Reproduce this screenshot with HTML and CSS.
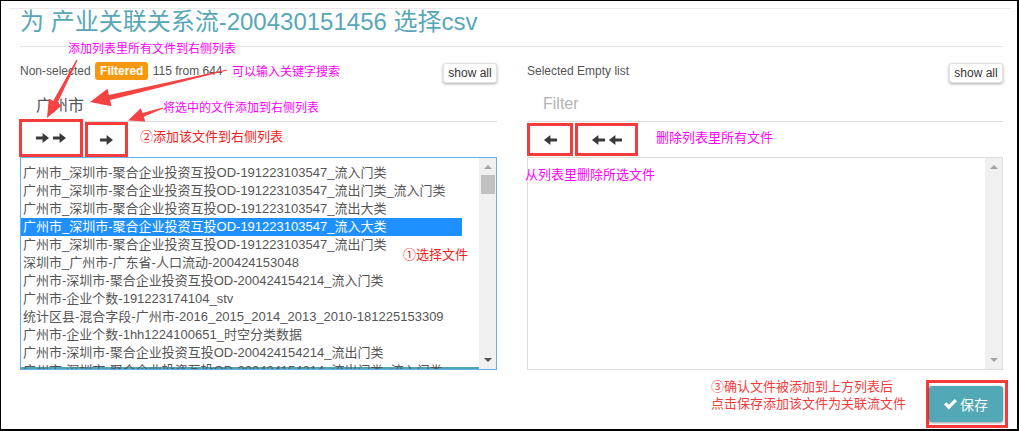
FILE: index.html
```html
<!DOCTYPE html>
<html lang="zh-CN">
<head>
<meta charset="utf-8">
<title>选择csv</title>
<link rel="stylesheet" href="styles.css">
</head>
<body>
<div class="page">
  <div class="topline"></div>
  <h1 class="title">为 产业关联关系流-200430151456 选择csv</h1>
  <div class="rule"></div>

  <div class="columns">
    <div class="col">
      <div class="col-head">
        <div class="info">Non-selected <span class="badge">Filtered</span> 115 from 644</div>
        <button class="show-all">show all</button>
      </div>
      <div class="filter"><span class="filter-value">广州市</span></div>
      <div class="btn-row">
        <button class="mv mv-all-right">
          <svg class="ar" viewBox="0 0 13 10"><path d="M0 3.4H6.6V0L13 5L6.6 10V6.6H0Z"/></svg>
          <svg class="ar" viewBox="0 0 13 10"><path d="M0 3.4H6.6V0L13 5L6.6 10V6.6H0Z"/></svg>
        </button>
        <button class="mv mv-one-right">
          <svg class="ar" viewBox="0 0 13 10"><path d="M0 3.4H6.6V0L13 5L6.6 10V6.6H0Z"/></svg>
        </button>
      </div>
      <div class="listbox focused">
        <ul class="items">
          <li>广州市_深圳市-聚合企业投资互投OD-191223103547_流入门类</li>
          <li>广州市_深圳市-聚合企业投资互投OD-191223103547_流出门类_流入门类</li>
          <li>广州市_深圳市-聚合企业投资互投OD-191223103547_流出大类</li>
          <li class="selected">广州市_深圳市-聚合企业投资互投OD-191223103547_流入大类</li>
          <li>广州市_深圳市-聚合企业投资互投OD-191223103547_流出门类</li>
          <li>深圳市_广州市-广东省-人口流动-200424153048</li>
          <li>广州市-深圳市-聚合企业投资互投OD-200424154214_流入门类</li>
          <li>广州市-企业个数-191223174104_stv</li>
          <li>统计区县-混合字段-广州市-2016_2015_2014_2013_2010-181225153309</li>
          <li>广州市-企业个数-1hh1224100651_时空分类数据</li>
          <li>广州市-深圳市-聚合企业投资互投OD-200424154214_流出门类</li>
          <li>广州市-深圳市-聚合企业投资互投OD-200424154214_流出门类_流入门类</li>
        </ul>
        <div class="sb">
          <span class="sb-up"></span>
          <span class="sb-thumb"></span>
          <span class="sb-space"></span>
          <span class="sb-down dark"></span>
        </div>
      </div>
    </div>

    <div class="col">
      <div class="col-head">
        <div class="info">Selected Empty list</div>
        <button class="show-all">show all</button>
      </div>
      <div class="filter"><span class="filter-placeholder">Filter</span></div>
      <div class="btn-row right">
        <button class="mv mv-one-left">
          <svg class="ar" viewBox="0 0 13 10"><path d="M13 3.4H6.4V0L0 5L6.4 10V6.6H13Z"/></svg>
        </button>
        <button class="mv mv-all-left">
          <svg class="ar" viewBox="0 0 13 10"><path d="M13 3.4H6.4V0L0 5L6.4 10V6.6H13Z"/></svg>
          <svg class="ar" viewBox="0 0 13 10"><path d="M13 3.4H6.4V0L0 5L6.4 10V6.6H13Z"/></svg>
        </button>
      </div>
      <div class="listbox">
        <ul class="items empty"></ul>
        <div class="sb">
          <span class="sb-up"></span>
          <span class="sb-space"></span>
          <span class="sb-down"></span>
        </div>
      </div>
    </div>
  </div>

  <div class="footer">
    <div class="note">③确认文件被添加到上方列表后<br>点击保存添加该文件为关联流文件</div>
    <div class="save-frame">
      <button class="save">
        <svg class="check" viewBox="0 0 13 12"><path d="M0 6.6L2.3 4.3L4.8 6.8L10.7 0.9L13 3.2L4.8 11.4Z"/></svg>
        <span>保存</span>
      </button>
    </div>
  </div>

  <div class="annot magenta a1">添加列表里所有文件到右侧列表</div>
  <div class="annot magenta a2">可以输入关键字搜索</div>
  <div class="annot magenta a3">将选中的文件添加到右侧列表</div>
  <div class="annot red big r1">②添加该文件到右侧列表</div>
  <div class="annot red big r2">①选择文件</div>
  <div class="annot magenta big a4">删除列表里所有文件</div>
  <div class="annot magenta big a5">从列表里删除所选文件</div>

  <svg class="arrows" viewBox="0 0 1019 431" width="1019" height="431">
    <polygon points="77.6,60.2 57.5,103.1 61.8,105.6 47,118 48.8,98.4 53.1,100.9 76.4,59.8"/>
    <polygon points="227.1,70.6 110.1,99.9 111.5,106.2 90,102 107.5,88.8 108.9,95.1 226.9,69.4"/>
    <polygon points="163.2,108.5 143.7,116.7 145.4,121.4 128,120.5 140.8,108.2 142.5,112.9 162.8,107.5"/>
  </svg>
</div>
</body>
</html>
```

FILE: styles.css
```css
* { box-sizing: border-box; }

html, body {
  margin: 0;
  padding: 0;
  background: #fff;
}

body {
  font-family: "Liberation Sans", "Noto Sans CJK SC", sans-serif;
  color: #555;
}

.page {
  position: relative;
  width: 1019px;
  height: 431px;
  border-style: solid;
  border-color: #000;
  border-width: 1px 2px 2px 1px;
  overflow: hidden;
}

.topline {
  margin: 7px 6px 0 8px;
  border-top: 1px solid #e8e8e8;
}

.title {
  margin: 0 0 0 19px;
  font-size: 24px;
  line-height: 26px;
  font-weight: normal;
  color: #57a7b8;
  white-space: nowrap;
}

.rule {
  margin: 11px 14px 0 19px;
  border-top: 1px solid #e5e5e5;
}

.columns {
  display: flex;
  gap: 30px;
  padding: 0 0 0 19px;
}

.col {
  width: 477px;
  display: flex;
  flex-direction: column;
}
.col + .col { width: 476px; }

.col-head {
  margin-top: 15px;
  height: 21px;
  display: flex;
  justify-content: space-between;
  align-items: flex-start;
}

.info {
  font-size: 12px;
  line-height: 18px;
  color: #555;
  white-space: nowrap;
}

.badge {
  display: inline-block;
  height: 18px;
  line-height: 18px;
  padding: 0 5px;
  margin: 0 1px;
  border-radius: 3px;
  background: #f7990c;
  color: #fff;
  font-weight: bold;
  font-size: 12px;
  vertical-align: top;
}

.show-all {
  width: 54px;
  height: 20px;
  margin-top: 1px;
  padding: 0;
  border: 1px solid #e2e2e2;
  border-radius: 3px;
  background: #fff;
  box-shadow: 0 1px 3px rgba(0, 0, 0, 0.35);
  font-family: "Liberation Sans", sans-serif;
  font-size: 12px;
  color: #333;
}

.filter {
  height: 39px;
  border-bottom: 1px solid #dddddd;
  padding: 0 0 0 16px;
  display: flex;
  align-items: center;
  font-size: 16px;
}
.filter-value { color: #555; margin-top: 3px; }
.filter-placeholder { color: #b3b3b3; margin-top: 3px; }

.btn-row {
  height: 35px;
  display: flex;
  gap: 2px;
  align-items: flex-end;
}
.btn-row.right { align-items: flex-start; }

.mv {
  display: flex;
  align-items: center;
  justify-content: center;
  gap: 4px;
  padding: 0;
  background: #fff;
  border: 3px solid #f53b3b;
}
.mv-all-right { width: 64px; height: 38px; margin-left: -1px; }
.mv-one-right { width: 43px; height: 35px; }
.mv-one-left { width: 46px; height: 33px; margin-top: 1px; }
.mv-all-left { width: 63px; height: 33px; margin-top: 1px; }

.ar {
  width: 13px;
  height: 10px;
  fill: #3a3a3a;
}

.listbox {
  height: 213px;
  display: flex;
  border: 1px solid #dcdcdc;
  background: #fff;
}
.listbox.focused { border-color: #66afe9; }

.items {
  flex: 1;
  margin: 0;
  padding: 6px 0 0 0;
  list-style: none;
  overflow: hidden;
  font-size: 13px;
  line-height: 18px;
  color: #555;
}
.focused .items { box-shadow: inset 0 -2px 0 #4fa5b5; }

.items li {
  width: 441px;
  padding-left: 2px;
  white-space: nowrap;
  overflow: hidden;
}
.items li.selected {
  background: #1e90ff;
  color: #fff;
}

.sb {
  width: 17px;
  flex: none;
  background: #f0f0f0;
  display: flex;
  flex-direction: column;
  align-items: center;
  padding: 7px 0 7px;
}
.sb-up {
  width: 0; height: 0;
  border-left: 4px solid transparent;
  border-right: 4px solid transparent;
  border-bottom: 4px solid #a3a3a3;
}
.sb-down {
  width: 0; height: 0;
  border-left: 4px solid transparent;
  border-right: 4px solid transparent;
  border-top: 4px solid #a3a3a3;
}
.sb-down.dark { border-top-color: #505050; }
.sb-thumb {
  width: 14px;
  height: 19px;
  margin-top: 6px;
  background: #c1c1c1;
}
.sb-space { flex: 1; }

.footer {
  margin-top: 10px;
  display: flex;
  justify-content: flex-end;
  align-items: flex-start;
  padding-right: 9px;
}

.note {
  margin: -3px 21px 0 0;
  width: 194px;
  font-family: "Noto Sans CJK SC", sans-serif;
  font-size: 13px;
  line-height: 17px;
  color: #f53b3b;
  white-space: nowrap;
}

.save-frame {
  border: 3px solid #f53b3b;
  padding: 3px 2px 3px 0;
}

.save {
  width: 74px;
  height: 36px;
  display: flex;
  align-items: center;
  justify-content: center;
  gap: 3px;
  padding: 0;
  border: none;
  border-radius: 3px;
  background: #52a8b5;
  box-shadow: 0 1px 3px rgba(0, 0, 0, 0.4);
  color: #fff;
  font-family: "Noto Sans CJK SC", sans-serif;
  font-size: 14px;
}
.check {
  width: 13px;
  height: 12px;
  fill: #fff;
}

.annot {
  position: absolute;
  font-family: "Noto Sans CJK SC", sans-serif;
  font-size: 12px;
  line-height: 12px;
  white-space: nowrap;
}
.annot.big { font-size: 13px; line-height: 13px; }
.magenta { color: #ff00ff; }
.red { color: #f52020; }

.a1 { left: 67px; top: 41px; }
.a2 { left: 231px; top: 64px; }
.a3 { left: 162px; top: 100px; }
.r1 { left: 139px; top: 128px; }
.r2 { left: 402px; top: 246px; }
.a4 { left: 655px; top: 129px; }
.a5 { left: 524px; top: 166px; }

.arrows {
  position: absolute;
  left: -1px;
  top: -1px;
  pointer-events: none;
  fill: #f54242;
}
```
